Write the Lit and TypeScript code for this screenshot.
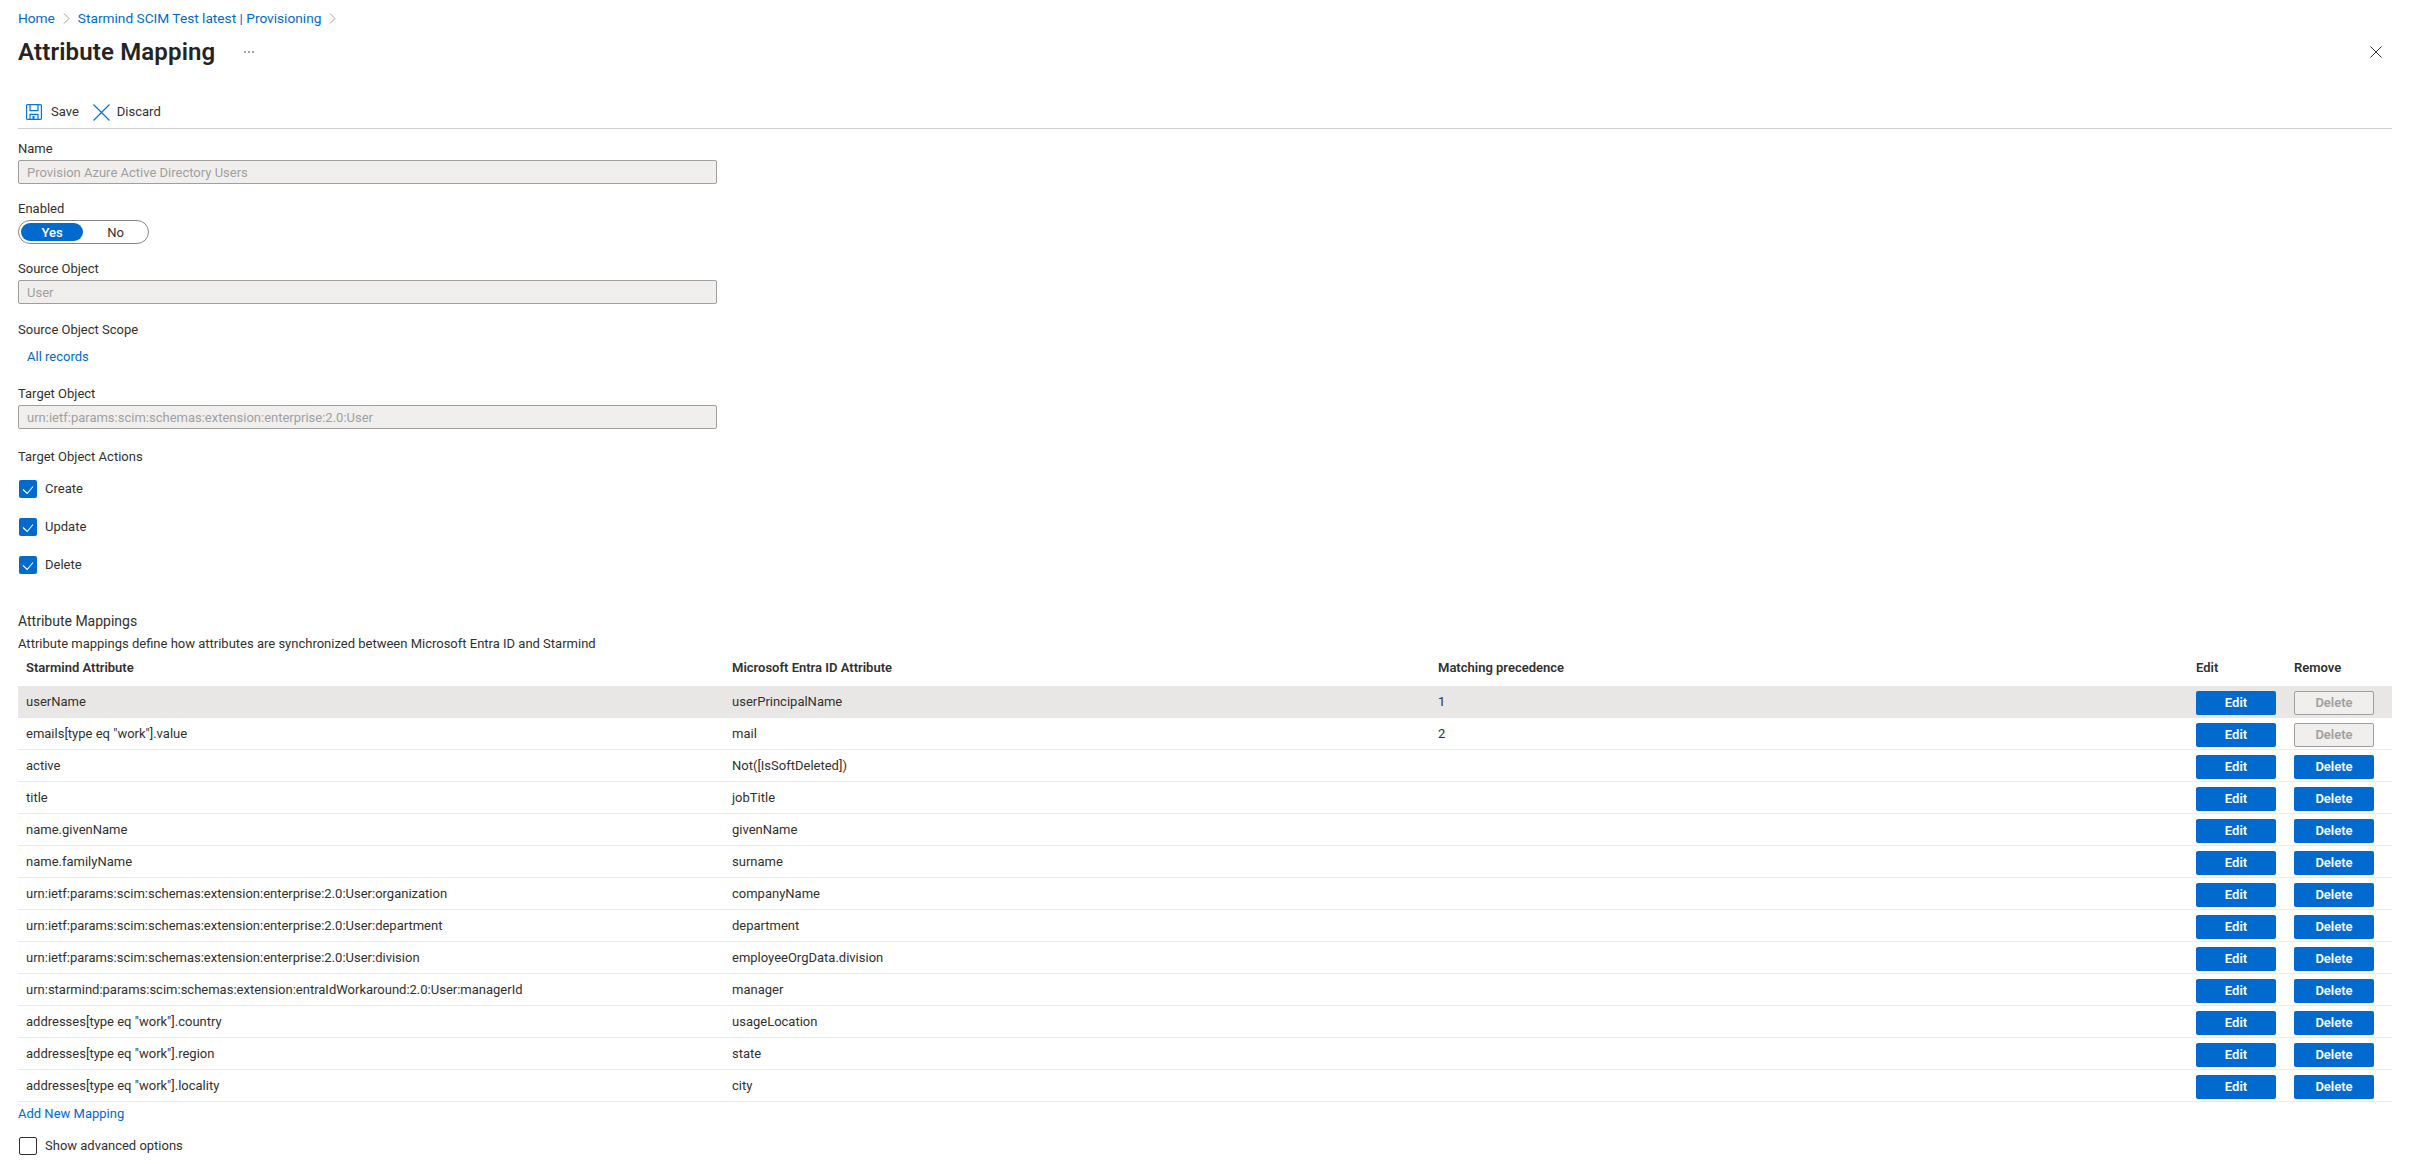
import { LitElement, html, css, svg } from "lit";
import { customElement } from "lit/decorators.js";

const rows: [string, string, string, boolean][] = [
  ["userName", "userPrincipalName", "1", true],
  ['emails[type eq "work"].value', "mail", "2", true],
  ["active", "Not([IsSoftDeleted])", "", false],
  ["title", "jobTitle", "", false],
  ["name.givenName", "givenName", "", false],
  ["name.familyName", "surname", "", false],
  ["urn:ietf:params:scim:schemas:extension:enterprise:2.0:User:organization", "companyName", "", false],
  ["urn:ietf:params:scim:schemas:extension:enterprise:2.0:User:department", "department", "", false],
  ["urn:ietf:params:scim:schemas:extension:enterprise:2.0:User:division", "employeeOrgData.division", "", false],
  ["urn:starmind:params:scim:schemas:extension:entraIdWorkaround:2.0:User:managerId", "manager", "", false],
  ['addresses[type eq "work"].country', "usageLocation", "", false],
  ['addresses[type eq "work"].region', "state", "", false],
  ['addresses[type eq "work"].locality', "city", "", false],
];

const check = svg`<svg width="18" height="18" viewBox="0 0 18 18"><path d="M4 9.5l4.2 4L14 6.5" fill="none" stroke="#fff" stroke-width="1.1"/></svg>`;
const chev = svg`<svg width="7" height="11" viewBox="0 0 7 11"><path d="M1 .5l5 5-5 5" fill="none" stroke="#a19f9d" stroke-width="1"/></svg>`;

@customElement("app-root")
export class AppRoot extends LitElement {
  static styles = css`
    :host { display: block; width: 2410px; height: 1164px; overflow: hidden; background: #fff; color: #323130;
      font: 13px/18px Roboto, sans-serif; box-sizing: border-box; padding: 0 18px; }
    a { color: #006acf; text-decoration: none; }
    .crumbs { display: flex; align-items: center; gap: 8px; height: 18px; padding-top: 9px; line-height: 20px; font-size: 13.7px; }
    .head { display: flex; align-items: center; height: 34px; margin-top: 8px; }
    h1 { margin: 0; font-size: 24px; line-height: 34px; font-weight: 600; color: #252423; letter-spacing: 0.15px; }
    .more { margin-left: 29px; display: flex; gap: 2px; }
    .more i { width: 2px; height: 2px; background: #8a8886; border-radius: 50%; display: block; }
    .close { margin-left: auto; margin-right: 10px; display: flex; }
    .bar { display: flex; align-items: center; height: 33px; margin-top: 27px; border-bottom: 1px solid #d2d0ce; box-sizing: border-box; padding: 0 8px; }
    .btn { display: flex; align-items: center; }
    .btn svg { display: block; }
    .save { gap: 9px; margin-right: 14px; }
    .discard { gap: 7px; }
    .label { height: 18px; line-height: 20px; }
    .input { height: 24px; width: 699px; box-sizing: border-box; background: #f0efee; border: 1px solid #a19f9d; border-radius: 2px; color: #a19f9d; padding: 0 8px; line-height: 23px; margin-top: 3px; }
    .m10 { margin-top: 10px; } .m15 { margin-top: 15px; } .m16 { margin-top: 16px; }
    .m18 { margin-top: 18px; } .m19 { margin-top: 19px; } .m20 { margin-top: 20px; }
    .m37 { margin-top: 37px; } .m5 { margin-top: 5px; }
    .toggle { display: flex; width: 131px; height: 24px; box-sizing: border-box; border: 1px solid #8a8886; border-radius: 12px; padding: 2px; margin-top: 3px; }
    .toggle span { width: 62px; text-align: center; line-height: 19px; height: 18px; border-radius: 9px; }
    .toggle .on { background: #006acf; color: #fff; font-weight: 500; }
    .toggle .off { flex: 1; padding-left: 2px; }
    .link { padding-left: 9px; margin-top: 9px; line-height: 19px; height: 18px; }
    .cb { display: flex; align-items: center; gap: 8px; height: 18px; margin-left: 1px; }
    .box { width: 18px; height: 18px; box-sizing: border-box; border-radius: 2px; background: #006acf; display: block; }
    .box svg { display: block; }
    .box.off { background: #fff; border: 1px solid #323130; }
    .section { font-size: 14px; }
    table { border-collapse: separate; border-spacing: 0; table-layout: fixed; width: 2374px; }
    .c1, .c2 { width: 706px; } .c3 { width: 766px; } .c4, .c5 { width: 98px; }
    th { text-align: left; font-weight: 600; padding: 7px 0 0 8px; height: 34px; box-sizing: border-box; vertical-align: top; }
    td { padding: 1px 0 0 8px; height: 32px; box-sizing: border-box; border-bottom: 1px solid #edebe9; }
    tr.sel td { background: #e8e7e5; border-bottom-color: #e8e7e5; }
    th.act { padding-left: 0; }
    td.act { padding: 5px 0 0 0; vertical-align: top; }
    .b { display: block; width: 80px; height: 24px; box-sizing: border-box; border-radius: 2px; background: #006acf; color: #fff; font-weight: 600; text-align: center; line-height: 24px; }
    .b.dis { background: #f0efee; color: #a19f9d; border: 1px solid #a19f9d; line-height: 22px; }
    .add { margin-top: 2px; height: 18px; line-height: 19px; }
  `;
  render() {
    return html`
      <div class="crumbs"><a>Home</a>${chev}<a>Starmind SCIM Test latest | Provisioning</a>${chev}</div>
      <div class="head"><h1>Attribute Mapping</h1><span class="more"><i></i><i></i><i></i></span>
        <span class="close"><svg width="12" height="12" viewBox="0 0 12 12"><path d="M.5.5l11 11M11.5.5l-11 11" stroke="#323130" stroke-width="1"/></svg></span></div>
      <div class="bar">
        <div class="btn save"><svg width="16" height="16" viewBox="0 0 16 16" fill="none" stroke="#0078d4" stroke-width="1.2"><path d="M1.5.6h13a.9.9 0 0 1 .9.9v13a.9.9 0 0 1-.9.9h-13a.9.9 0 0 1-.9-.9v-13a.9.9 0 0 1 .9-.9z"/><path d="M4 .6v6h8v-6M4 15.4v-5h8v5"/><path d="M6.5 12h2v3.4h-2z" fill="#0078d4" stroke="none"/></svg><span>Save</span></div>
        <div class="btn discard"><svg width="17" height="17" viewBox="0 0 17 17"><path d="M.5.5l16 16M16.5.5l-16 16" stroke="#0078d4" stroke-width="1.2"/></svg><span>Discard</span></div>
      </div>
      <div class="label m10">Name</div>
      <div class="input">Provision Azure Active Directory Users</div>
      <div class="label m15">Enabled</div>
      <div class="toggle"><span class="on">Yes</span><span class="off">No</span></div>
      <div class="label m15">Source Object</div>
      <div class="input">User</div>
      <div class="label m16">Source Object Scope</div>
      <div class="link"><a>All records</a></div>
      <div class="label m19">Target Object</div>
      <div class="input">urn:ietf:params:scim:schemas:extension:enterprise:2.0:User</div>
      <div class="label m18">Target Object Actions</div>
      <div class="cb m15"><span class="box">${check}</span>Create</div>
      <div class="cb m20"><span class="box">${check}</span>Update</div>
      <div class="cb m20"><span class="box">${check}</span>Delete</div>
      <div class="label section m37">Attribute Mappings</div>
      <div class="label m5">Attribute mappings define how attributes are synchronized between Microsoft Entra ID and Starmind</div>
      <table>
        <colgroup><col class="c1"><col class="c2"><col class="c3"><col class="c4"><col class="c5"></colgroup>
        <thead><tr><th>Starmind Attribute</th><th>Microsoft Entra ID Attribute</th><th>Matching precedence</th><th class="act">Edit</th><th class="act">Remove</th></tr></thead>
        <tbody>
          ${rows.map((r, i) => html`<tr class=${i === 0 ? "sel" : ""}><td>${r[0]}</td><td>${r[1]}</td><td>${r[2]}</td>
            <td class="act"><span class="b">Edit</span></td><td class="act"><span class="b ${r[3] ? "dis" : ""}">Delete</span></td></tr>`)}
        </tbody>
      </table>
      <div class="add"><a>Add New Mapping</a></div>
      <div class="cb m15"><span class="box off"></span>Show advanced options</div>
    `;
  }
}
